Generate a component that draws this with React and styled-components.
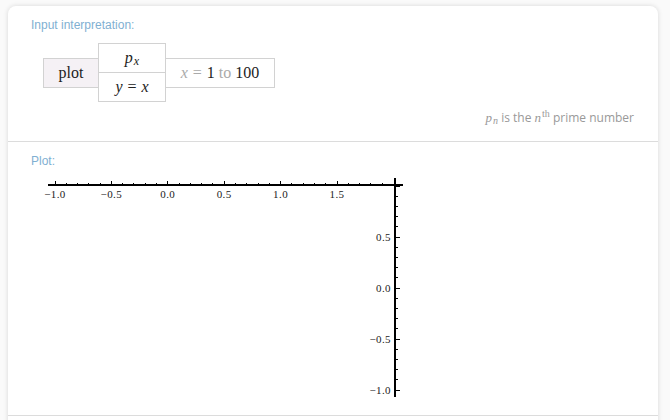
import React from "react";
import styled, { createGlobalStyle } from "styled-components";

const Global = createGlobalStyle`
  html, body { margin: 0; padding: 0; background: #fafafa; overflow: hidden; }
  body { font-family: "Liberation Sans", Arial, sans-serif; }
`;

const Page = styled.div`
  padding: 6px 12px 0 8px;
`;

const Card = styled.div`
  background: #fff;
  border-radius: 8px 8px 0 0;
  box-shadow: 0 0 5px rgba(0, 0, 0, 0.14);
  height: 430px;
`;

const Section = styled.section`
  box-sizing: border-box;
  height: ${(p) => p.$h}px;
  border-bottom: 1px solid #dcdcdc;
  padding: 11px 24px 0 23px;
  display: flex;
  flex-direction: column;
`;

const Label = styled.div`
  font-family: "Liberation Sans", Arial, sans-serif;
  font-size: 12px;
  line-height: 16px;
  color: #7fb0d2;
`;

const InputTable = styled.div`
  display: flex;
  align-items: center;
  margin: 10px 0 0 12px;
  font-family: "Liberation Serif", "Times New Roman", serif;
  color: #222;
`;

const Cell = styled.div`
  box-sizing: border-box;
  width: ${(p) => p.$w}px;
  height: ${(p) => p.$h}px;
  border: 1px solid #d2d2d2;
  background: ${(p) => (p.$shade ? "#f5f1f5" : "#fff")};
  display: flex;
  align-items: center;
  justify-content: center;
  font-size: 16px;
  margin-left: ${(p) => (p.$overlap ? -1 : 0)}px;
`;

const Stack = styled.div`
  display: flex;
  flex-direction: column;
  margin-left: -1px;
  & > div + div { margin-top: -1px; }
`;

const I = styled.i`
  font-style: italic;
  color: ${(p) => (p.$muted ? "#aaa" : "inherit")};
`;

const Op = styled.span`
  margin: 0 ${(p) => p.$gap}px;
  color: ${(p) => (p.$muted ? "#aaa" : "inherit")};
`;

const Sub = styled.sub`
  font-size: ${(p) => p.$size || 12}px;
  vertical-align: -2px;
  line-height: 0;
  margin-left: 1px;
`;

const Sup = styled.sup`
  font-family: "Liberation Serif", serif;
  font-style: normal;
  font-size: 10px;
  vertical-align: 5px;
  line-height: 0;
  margin-left: 1px;
`;

const Note = styled.div`
  align-self: flex-end;
  margin-top: 9px;
  font-family: "Open Sans", "Liberation Sans", sans-serif;
  font-size: 12px;
  line-height: 14px;
  color: #999;
`;

const MathText = styled.span`
  font-family: "Liberation Serif", serif;
  font-style: italic;
  font-size: 13px;
`;

const PlotSvg = styled.svg`
  display: block;
  margin-top: 3px;
  overflow: visible;
`;

const OX = 31;
const OY = 172;

function Plot() {
  const xAxisY = 185 - OY;
  const yAxisX = 395 - OX;
  const xAt = (v) => 55 + (v + 1) * 112.8 - OX;
  const yAt = (v) => 288 - 102 * v - OY;
  const xTicks = [];
  for (let i = 0; i <= 29; i++) {
    const v = -1 + i * 0.1;
    const x = xAt(v);
    const major = i % 5 === 0;
    xTicks.push(
      <line key={"xt" + i} x1={x} x2={x} y1={xAxisY} y2={xAxisY - (major ? 4.5 : 2.5)} stroke="#000" strokeWidth="1" />
    );
  }
  const xLabels = [-1, -0.5, 0, 0.5, 1, 1.5];
  const yTicks = [];
  for (let i = 0; i <= 20; i++) {
    const v = 1 - i * 0.1;
    const y = yAt(v);
    const major = i % 5 === 0;
    yTicks.push(
      <line key={"yt" + i} x1={yAxisX} x2={yAxisX + (major ? 4.5 : 2.5)} y1={y} y2={y} stroke="#000" strokeWidth="1" />
    );
  }
  const yLabels = [0.5, 0, -0.5, -1];
  const fmt = (v) => (v < 0 ? "\u2212" : "") + Math.abs(v).toFixed(1);
  return (
    <PlotSvg width="380" height="230" viewBox="0 0 380 230">
      <g shapeRendering="crispEdges">
        <line x1={48 - OX} x2={403 - OX} y1={xAxisY} y2={xAxisY} stroke="#000" strokeWidth="1.2" />
        <line x1={yAxisX} x2={yAxisX} y1={178 - OY} y2={397 - OY} stroke="#000" strokeWidth="1.2" />
        {xTicks}
        {yTicks}
      </g>
      <g fontFamily="Liberation Serif, serif" fontSize="11" fill="#222" letterSpacing="0.4">
        {xLabels.map((v) => (
          <text key={"xl" + v} x={xAt(v)} y={198 - OY} textAnchor="middle">{fmt(v)}</text>
        ))}
        {yLabels.map((v) => (
          <text key={"yl" + v} x={391 - OX} y={yAt(v) + 4} textAnchor="end">{fmt(v)}</text>
        ))}
      </g>
    </PlotSvg>
  );
}

export default function App() {
  return (
    <>
      <Global />
      <Page>
        <Card>
          <Section $h={136}>
            <Label>Input interpretation:</Label>
            <InputTable>
              <Cell $w={56} $h={30} $shade>plot</Cell>
              <Stack>
                <Cell $w={68} $h={30}>
                  <I>p<Sub>x</Sub></I>
                </Cell>
                <Cell $w={68} $h={30}>
                  <I>y</I><Op $gap={5}>=</Op><I>x</I>
                </Cell>
              </Stack>
              <Cell $w={110} $h={30} $overlap>
                <I $muted>x</I><Op $gap={5} $muted>=</Op>1<Op $gap={4} $muted>to</Op>100
              </Cell>
            </InputTable>
            <Note>
              <MathText>p<Sub $size={10}>n</Sub></MathText> is the <MathText>n</MathText>
              <Sup>th</Sup> prime number
            </Note>
          </Section>
          <Section $h={274}>
            <Label>Plot:</Label>
            <Plot />
          </Section>
        </Card>
      </Page>
    </>
  );
}
